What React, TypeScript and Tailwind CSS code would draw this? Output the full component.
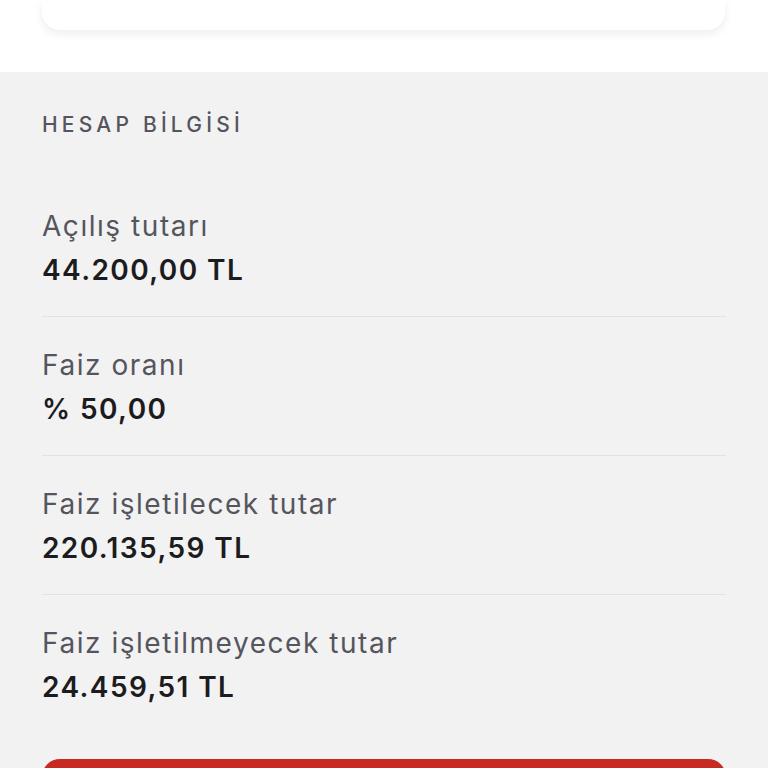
import React from "react";

const items = [
  { label: "Açılış tutarı", value: "44.200,00 TL" },
  { label: "Faiz oranı", value: "% 50,00" },
  { label: "Faiz işletilecek tutar", value: "220.135,59 TL" },
  { label: "Faiz işletilmeyecek tutar", value: "24.459,51 TL" },
];

export default function App() {
  return (
    <div className="w-[768px] h-[768px] overflow-hidden bg-[#f2f2f3]" style={{ fontFamily: "Inter, 'Noto Sans', sans-serif" }}>
      <div className="h-[72px] bg-white px-[42px]">
        <div className="h-[30px] bg-white rounded-b-[18px] shadow-[0_4px_10px_rgba(0,0,0,0.07)] mr-[1px]" />
      </div>
      <div className="px-[42px] pt-[39px]">
        <div className="h-[28px] leading-[28px] text-[21px] font-medium tracking-[0.2em] text-[#55555e]">HESAP BİLGİSİ</div>
        <div className="mt-[39px]">
          {items.map((it, i) => (
            <div key={i} className={"pt-[26px] " + (i < items.length - 1 ? "pb-[23px] border-b border-[#e2e2e4]" : "")}>
              <div className="h-[44px] leading-[44px] text-[28px] tracking-[0.055em] text-[#55555e]">{it.label}</div>
              <div className="h-[45px] leading-[45px] text-[28px] font-semibold tracking-[0.05em] text-[#1c1c1e]">{it.value}</div>
            </div>
          ))}
        </div>
        <div className="mt-[49px] h-[60px] rounded-[18px] bg-[#c62a22]" />
      </div>
    </div>
  );
}
